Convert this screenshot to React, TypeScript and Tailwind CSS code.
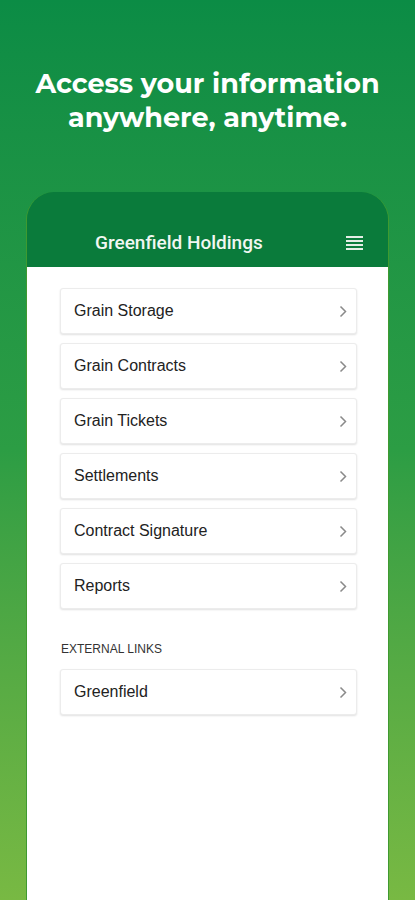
const items = ['Grain Storage', 'Grain Contracts', 'Grain Tickets', 'Settlements', 'Contract Signature', 'Reports']

function Chevron() {
  return (
    <svg width="8" height="13" viewBox="0 0 8 13" fill="none" className="shrink-0">
      <path d="M1.5 1.5L6.5 6.5L1.5 11.5" stroke="#8a8a8a" strokeWidth="1.5" />
    </svg>
  )
}

function Row({ label }: { label: string }) {
  return (
    <div className="flex h-[46px] items-center justify-between rounded-[3px] border border-[#ececec] bg-white pl-[13px] pr-[9px] shadow-[0_1px_2px_rgba(0,0,0,0.12)]">
      <span className="text-[16px] text-[#222]" style={{ fontFamily: '"Liberation Sans", Arial, sans-serif' }}>
        {label}
      </span>
      <Chevron />
    </div>
  )
}

export default function App() {
  return (
    <div className="flex h-[900px] w-[415px] flex-col overflow-hidden bg-gradient-to-b from-[#0b8c45] via-[#2c9d44] to-[#78b943]">
      <h1
        className="mt-[67px] text-center text-[27px] leading-[34px] font-bold text-white"
        style={{ fontFamily: 'Montserrat, "Open Sans", sans-serif' }}
      >
        Access your information
        <br />
        anywhere, anytime.
      </h1>

      <div className="mt-[57px] mr-[26px] ml-[26px] flex flex-1 flex-col overflow-hidden rounded-t-[28px] border-l border-r border-[#3f9a30]">
        <div className="flex h-[75px] items-end bg-[#0a7b3b] pb-[12px]">
          <span
            className="ml-[68px] text-[19px] leading-[24px] font-medium text-[#f1f7f2]"
            style={{ fontFamily: 'Roboto, sans-serif' }}
          >
            Greenfield Holdings
          </span>
          <div className="mr-[25px] mb-[5px] ml-auto flex w-[17px] flex-col gap-[2px]">
            <div className="h-[2px] bg-[#e4eee6]" />
            <div className="h-[2px] bg-[#e4eee6]" />
            <div className="h-[2px] bg-[#e4eee6]" />
            <div className="h-[2px] bg-[#e4eee6]" />
          </div>
        </div>
        <div className="flex flex-1 flex-col bg-white pt-[21px] pr-[31px] pl-[33px]">
          <div className="flex flex-col gap-[9px]">
            {items.map(i => (
              <Row key={i} label={i} />
            ))}
          </div>
          <div
            className="mt-[31px] mb-[11px] pl-[1px] text-[12px] text-[#333] uppercase"
            style={{ fontFamily: '"Liberation Sans", Arial, sans-serif' }}
          >
            External Links
          </div>
          <Row label="Greenfield" />
        </div>
      </div>
    </div>
  )
}
